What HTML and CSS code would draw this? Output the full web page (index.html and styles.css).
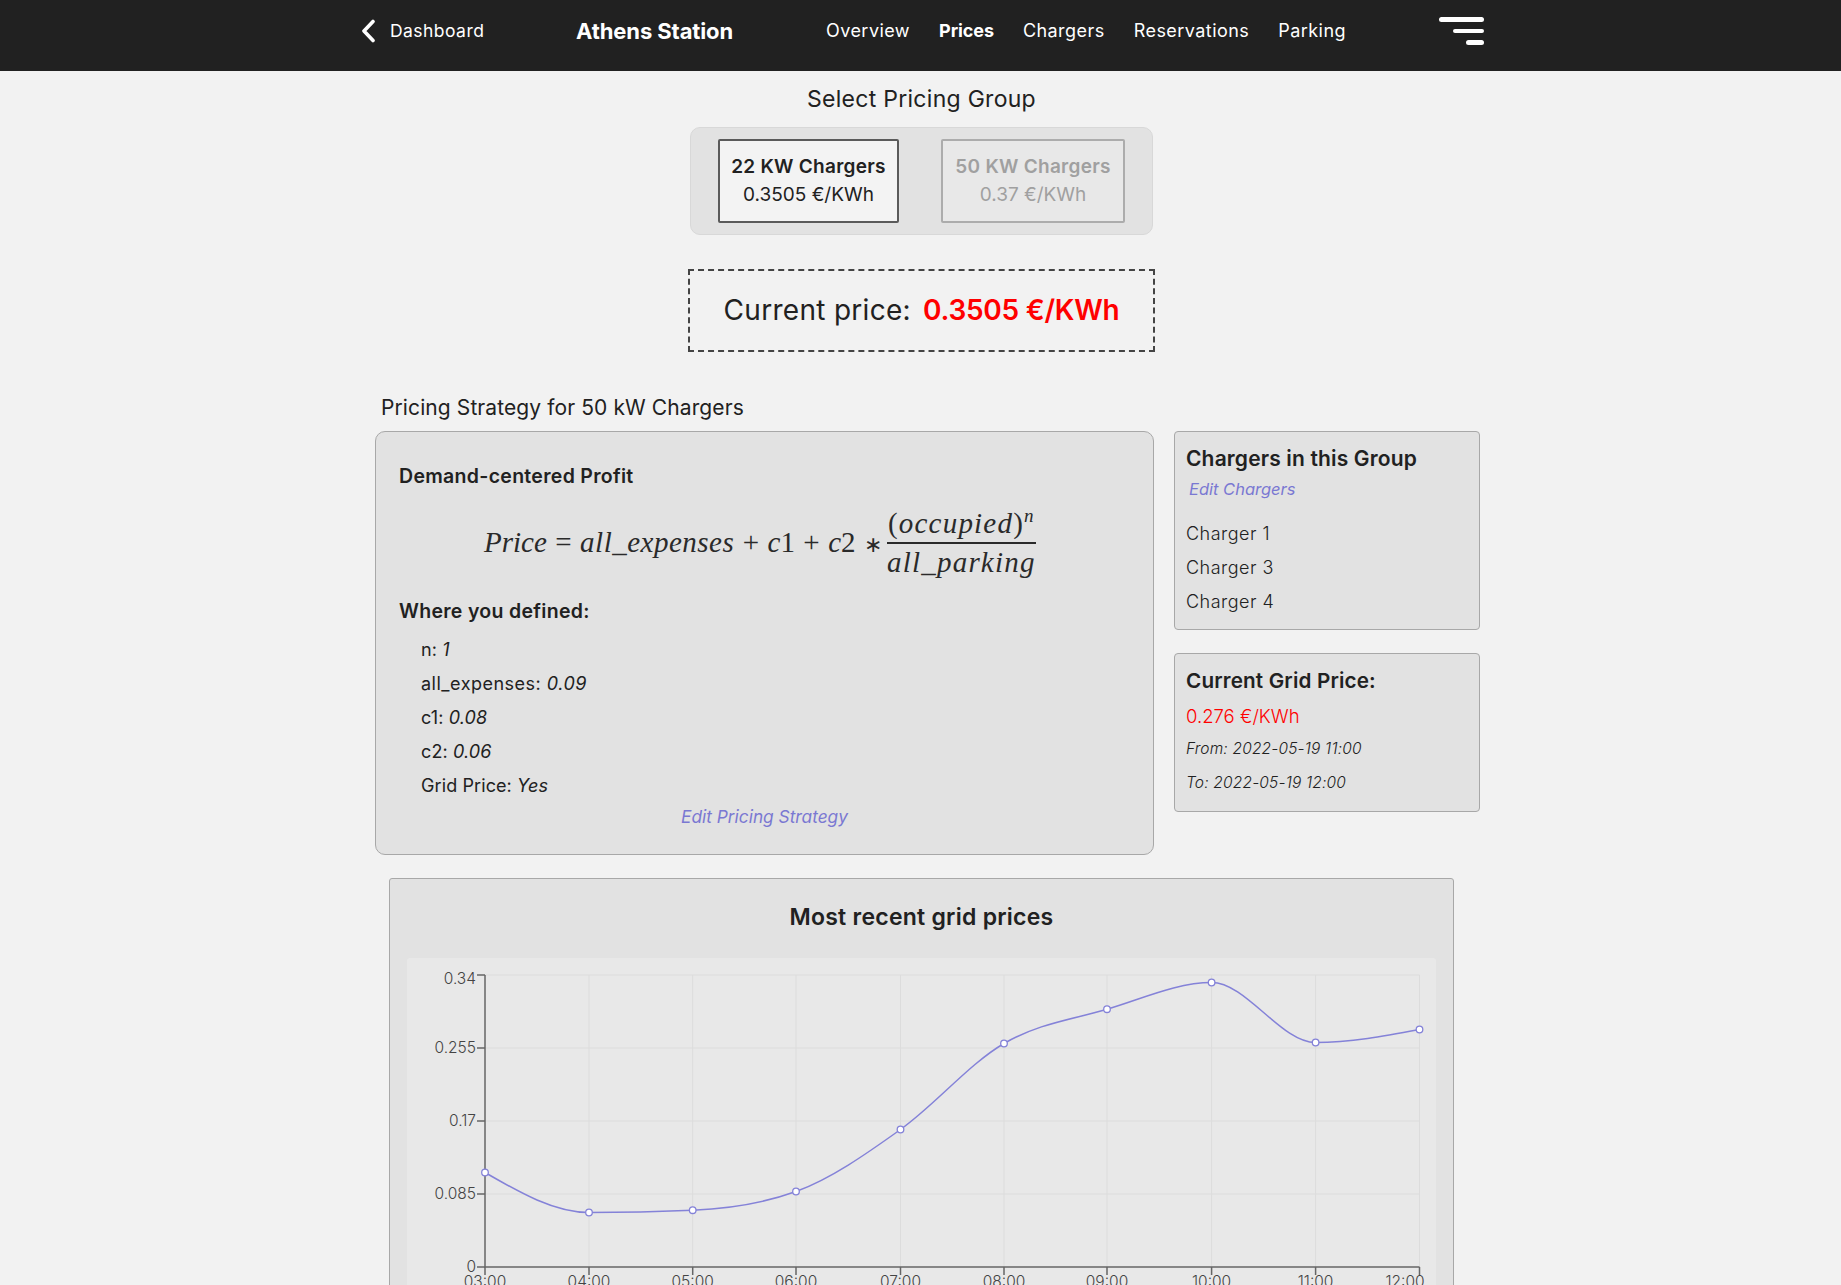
FILE: index.html
```html
<!DOCTYPE html>
<html lang="en">
<head>
<meta charset="utf-8">
<title>Athens Station - Prices</title>
<link rel="stylesheet" href="styles.css">
</head>
<body>
<header class="topbar">
  <a class="back">
    <svg class="back-icon" width="14" height="24" viewBox="0 0 14 24"><path d="M12 2.500 3 12l9 9.500" fill="none" stroke="#fff" stroke-width="3.600" stroke-linecap="round" stroke-linejoin="round"/></svg>
    <span>Dashboard</span>
  </a>
  <div class="station">Athens Station</div>
  <nav class="nav">
    <a>Overview</a>
    <a class="active">Prices</a>
    <a>Chargers</a>
    <a>Reservations</a>
    <a>Parking</a>
  </nav>
  <div class="burger"><i class="b1"></i><i class="b2"></i><i class="b3"></i></div>
</header>

<main class="page">
  <h2 class="select-title">Select Pricing Group</h2>
  <div class="groups">
    <div class="group selected"><b>22 KW Chargers</b><span>0.3505 €/KWh</span></div>
    <div class="group muted"><b>50 KW Chargers</b><span>0.37 €/KWh</span></div>
  </div>
  <div class="current"><span>Current price:</span><strong>0.3505 €/KWh</strong></div>

  <section class="strategy">
    <h3 class="strategy-title">Pricing Strategy for 50 kW Chargers</h3>
    <div class="columns">
      <div class="card main-card">
        <h4 class="label">Demand-centered Profit</h4>
        <div class="formula">
          <span class="expr"><i>Price</i> = <i class="long">all_expenses</i> + <i>c</i>1 + <i>c</i>2 <span class="star">∗</span></span>
          <span class="fraction"><span class="num"><span class="paren">(</span><i>occupied</i><span class="paren">)</span><sup><i>n</i></sup></span><span class="den"><i>all_parking</i></span></span>
        </div>
        <h4 class="label where">Where you defined:</h4>
        <ul class="params">
          <li>n: <em>1</em></li>
          <li class="long-param">all_expenses: <em>0.09</em></li>
          <li>c1: <em>0.08</em></li>
          <li>c2: <em>0.06</em></li>
          <li>Grid Price: <em>Yes</em></li>
        </ul>
        <a class="link edit-strategy">Edit Pricing Strategy</a>
      </div>
      <div class="side">
        <div class="card side-card chargers">
          <h4 class="side-title">Chargers in this Group</h4>
          <a class="link edit-chargers">Edit Chargers</a>
          <ul class="charger-list">
            <li>Charger 1</li>
            <li>Charger 3</li>
            <li>Charger 4</li>
          </ul>
        </div>
        <div class="card side-card grid-price">
          <h4 class="side-title">Current Grid Price:</h4>
          <div class="grid-value">0.276 €/KWh</div>
          <div class="grid-time">From: 2022-05-19 11:00</div>
          <div class="grid-time">To: 2022-05-19 12:00</div>
        </div>
      </div>
    </div>
  </section>

  <section class="card chart-card">
    <h3 class="chart-title">Most recent grid prices</h3>
    <div class="chart-panel">
      <svg class="chart" width="1029" height="340" viewBox="407 958 1029 340">
        <g class="grid">
          <path d="M485 975H1419.500M485 1048H1419.500M485 1121H1419.500M485 1194H1419.500"/>
          <path d="M589 975V1267M692.700 975V1267M796 975V1267M900.500 975V1267M1004 975V1267M1107 975V1267M1211.600 975V1267M1315.600 975V1267M1419.500 975V1267"/>
        </g>
        <g class="axis">
          <path d="M485 975V1267H1419.500"/>
          <path d="M477 975H485M477 1048H485M477 1121H485M477 1194H485M477 1267H485"/>
          <path d="M485 1267V1275M589 1267V1275M692.700 1267V1275M796 1267V1275M900.500 1267V1275M1004 1267V1275M1107 1267V1275M1211.600 1267V1275M1315.600 1267V1275M1419.500 1267V1275"/>
        </g>
        <g class="ticks y-ticks">
          <text x="476" y="984">0.34</text>
          <text x="476" y="1053">0.255</text>
          <text x="476" y="1126">0.17</text>
          <text x="476" y="1199">0.085</text>
          <text x="476" y="1272">0</text>
        </g>
        <g class="ticks x-ticks">
          <text x="485" y="1287">03:00</text>
          <text x="589" y="1287">04:00</text>
          <text x="692.700" y="1287">05:00</text>
          <text x="796" y="1287">06:00</text>
          <text x="900.500" y="1287">07:00</text>
          <text x="1004" y="1287">08:00</text>
          <text x="1107" y="1287">09:00</text>
          <text x="1211.600" y="1287">10:00</text>
          <text x="1315.600" y="1287">11:00</text>
          <text x="1405" y="1287">12:00</text>
        </g>
        <path class="line" d="M485 1172.500C519.600 1192.500 554.400 1212.500 589 1212.500C623.600 1212.500 658.100 1211.700 692.700 1210.200C727.300 1208.700 761.400 1204 796 1191.500C830.600 1179 865.900 1154.200 900.500 1129.500C935.100 1104.800 969.400 1063.600 1004 1043.500C1038.600 1023.400 1072.400 1019.400 1107 1009.200C1141.600 999 1177 982.500 1211.600 982.500C1246.200 982.500 1281 1042.500 1315.600 1042.500C1350.200 1042.500 1384.900 1036 1419.500 1029.500"/>
        <g class="dots">
          <circle cx="485" cy="1172.500" r="3.300"/>
          <circle cx="589" cy="1212.500" r="3.300"/>
          <circle cx="692.700" cy="1210.200" r="3.300"/>
          <circle cx="796" cy="1191.500" r="3.300"/>
          <circle cx="900.500" cy="1129.500" r="3.300"/>
          <circle cx="1004" cy="1043.500" r="3.300"/>
          <circle cx="1107" cy="1009.200" r="3.300"/>
          <circle cx="1211.600" cy="982.500" r="3.300"/>
          <circle cx="1315.600" cy="1042.500" r="3.300"/>
          <circle cx="1419.500" cy="1029.500" r="3.300"/>
        </g>
      </svg>
    </div>
  </section>
</main>
</body>
</html>
```

FILE: styles.css
```css
* { box-sizing: border-box; }
html, body { margin: 0; padding: 0; height: 1285px; overflow: hidden; }
body {
  background: #f2f2f2;
  color: #212121;
  font-family: "Inter", "Noto Sans", sans-serif;
  font-size: 16px;
}
h2, h3, h4, ul { margin: 0; padding: 0; font-weight: inherit; font-size: inherit; }
ul { list-style: none; }

.topbar {
  height: 71px;
  background: #212121;
  color: #fff;
  display: flex;
  align-items: center;
  padding: 0 0 9px 361px;
  font-size: 18px;
  letter-spacing: 0.45px;
}
.back { display: flex; align-items: center; width: 215px; gap: 15px; font-size: 17.500px; letter-spacing: 0.45px; margin-bottom: 1px; }
.back-icon { display: block; }
.station { width: 250px; font-size: 22px; font-weight: 700; letter-spacing: -0.1px; }
.nav { display: flex; gap: 29px; width: 613px; margin-bottom: 2px; }
.nav .active { font-weight: 700; letter-spacing: -0.1px; }
.burger { display: flex; flex-direction: column; align-items: flex-end; gap: 7px; width: 45px; }
.burger i { display: block; height: 4.500px; background: #fff; border-radius: 3px; }
.b1 { width: 45px; }
.b2 { width: 31px; }
.b3 { width: 18px; }

.page { display: flex; flex-direction: column; }
.select-title { text-align: center; font-size: 23px; letter-spacing: 0.28px; line-height: 30px; margin: 13px 0 13px; padding-left: 2px; }
.groups {
  align-self: center;
  margin-left: 2px;
  width: 463px;
  height: 108px;
  background: #e2e2e2;
  border: 1px solid #d8d8d8;
  border-radius: 10px;
  display: flex;
  justify-content: center;
  align-items: center;
  gap: 42px;
}
.group {
  height: 84px;
  border: 2px solid #5a5a5a;
  border-radius: 2px;
  background: #f3f3f3;
  display: flex;
  flex-direction: column;
  align-items: center;
  justify-content: center;
  font-size: 19px;
  line-height: 28px;
  width: 181px;
}
.group b { font-weight: 600; letter-spacing: 0.27px; }
.group.muted { width: 184px; background: #e8e8e8; border-color: #acacac; color: #a0a0a0; }
.current {
  align-self: center;
  margin: 34px 0 0 2px;
  width: 467px;
  height: 83px;
  padding-bottom: 2px;
  border: 2px dashed #444;
  display: flex;
  align-items: center;
  justify-content: center;
  gap: 12px;
  font-size: 28px;
}
.current span { letter-spacing: 0.3px; }
.current strong { color: #f00; font-weight: 600; letter-spacing: -0.25px; }

.strategy { margin: 42px 0 0 375px; width: 1105px; }
.strategy-title { font-size: 21px; letter-spacing: 0.1px; line-height: 28px; margin: 0 0 9px 6px; }
.columns { display: flex; gap: 20px; align-items: flex-start; }
.card { background: #e2e2e2; border: 1px solid #a8a8a8; }
.main-card { width: 779px; height: 424px; border-radius: 10px; padding: 31px 23px 0; display: flex; flex-direction: column; }
.label { font-size: 19.500px; font-weight: 600; letter-spacing: 0.3px; line-height: 26px; }
.formula {
  margin: 6px 0 0 85px;
  height: 95px;
  display: flex;
  align-items: center;
  gap: 5px;
  font-family: "Liberation Serif", serif;
  font-size: 29px;
  color: #2a2a2a;
}
.expr { word-spacing: 1.200px; }
.long { letter-spacing: 0.5px; }
.star { font-size: 22px; }
.fraction { display: flex; flex-direction: column; align-items: center; line-height: 37px; letter-spacing: 1.2px; }
.num { border-bottom: 2px solid #2a2a2a; padding: 0 1px; }
.num sup { font-size: 19px; line-height: 0; }
.where { margin-top: 8px; }
.params { margin: 9px 0 0 22px; font-size: 18px; letter-spacing: 0.1px; line-height: 34px; }
.long-param { letter-spacing: 0.5px; }
.link { color: #7a78d2; font-style: italic; }
.edit-strategy { align-self: center; font-size: 17.300px; line-height: 30px; margin-top: -1px; }

.side { width: 306px; display: flex; flex-direction: column; gap: 23px; }
.side-card { border-radius: 4px; padding: 13px 11px 0; }
.chargers { height: 199px; }
.grid-price { height: 159px; }
.side-title { font-size: 21px; font-weight: 600; letter-spacing: 0.15px; line-height: 28px; }
.grid-price .side-title { font-size: 20.700px; }
.edit-chargers { display: block; margin: 4px 0 0 3px; font-size: 16.500px; line-height: 24px; }
.charger-list { margin-top: 16px; font-size: 18px; letter-spacing: 0.5px; line-height: 34px; font-weight: 300; }
.grid-value { color: #f00; font-size: 18.500px; line-height: 28px; margin-top: 7px; font-weight: 300; }
.grid-time { font-size: 15.500px; letter-spacing: 0.18px; font-style: italic; line-height: 34px; font-weight: 300; }
.grid-value + .grid-time { margin-top: 2px; }

.chart-card { margin: 23px 0 0 389px; width: 1065px; height: 500px; border-radius: 3px; padding: 0 17px; }
.chart-title { text-align: center; font-size: 23px; letter-spacing: 0.25px; font-weight: 600; line-height: 30px; padding-top: 23px; margin-bottom: 26px; }
.chart-panel { background: #e8e8e8; border-radius: 3px; height: 400px; }
.chart { display: block; }
.grid path { fill: none; stroke: #dcdcdc; stroke-width: 1; }
.axis path { fill: none; stroke: #666; stroke-width: 1.500; }
.ticks text { font-size: 15.500px; fill: #444; font-weight: 300; }
.y-ticks text { text-anchor: end; }
.x-ticks text { text-anchor: middle; }
.line { fill: none; stroke: #8482d8; stroke-width: 1.500; }
.dots circle { fill: #fff; stroke: #8482d8; stroke-width: 1.300; }
```
